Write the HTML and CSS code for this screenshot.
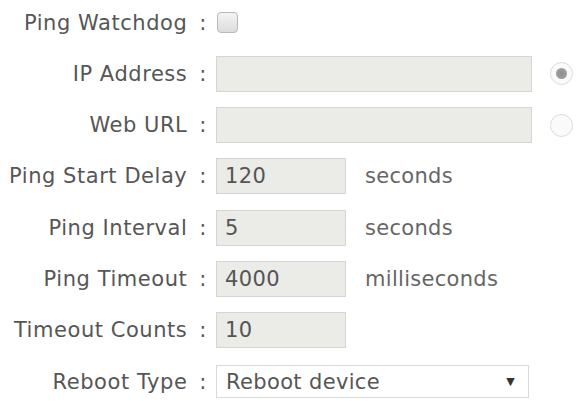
FILE: index.html
```html
<!DOCTYPE html>
<html lang="en">
<head>
<meta charset="utf-8">
<title>Ping Watchdog</title>
<link rel="stylesheet" href="styles.css">
</head>
<body>
<form class="watchdog">
  <div class="row">
    <label class="label" for="pw">Ping Watchdog<span class="colon">:</span></label>
    <input class="check" type="checkbox" id="pw">
  </div>
  <div class="row">
    <label class="label" for="ip">IP Address<span class="colon">:</span></label>
    <input class="field wide" type="text" id="ip">
    <input class="radio" type="radio" name="target" checked>
  </div>
  <div class="row">
    <label class="label" for="url">Web URL<span class="colon">:</span></label>
    <input class="field wide" type="text" id="url">
    <input class="radio" type="radio" name="target">
  </div>
  <div class="row">
    <label class="label" for="delay">Ping Start Delay<span class="colon">:</span></label>
    <input class="field short" type="text" id="delay" value="120">
    <span class="unit">seconds</span>
  </div>
  <div class="row">
    <label class="label" for="interval">Ping Interval<span class="colon">:</span></label>
    <input class="field short" type="text" id="interval" value="5">
    <span class="unit">seconds</span>
  </div>
  <div class="row">
    <label class="label" for="timeout">Ping Timeout<span class="colon">:</span></label>
    <input class="field short" type="text" id="timeout" value="4000">
    <span class="unit">milliseconds</span>
  </div>
  <div class="row">
    <label class="label" for="counts">Timeout Counts<span class="colon">:</span></label>
    <input class="field short" type="text" id="counts" value="10">
  </div>
  <div class="row">
    <span class="label">Reboot Type<span class="colon">:</span></span>
    <div class="select">
      <span class="select-value">Reboot device</span>
      <span class="select-arrow">▼</span>
    </div>
  </div>
</form>
</body>
</html>
```

FILE: styles.css
```css
* {
  box-sizing: border-box;
}

html, body {
  margin: 0;
  background: #ffffff;
}

body {
  font-family: "DejaVu Sans", Verdana, sans-serif;
  font-size: 21px;
  color: #565656;
}

.watchdog {
  display: flex;
  flex-direction: column;
  gap: 15.3px;
  padding-top: 4.5px;
}

.row {
  display: flex;
  align-items: center;
  height: 36px;
}

.label {
  width: 207px;
  margin-right: 9px;
  text-align: right;
  white-space: nowrap;
  letter-spacing: 0.55px;
}

/* colon sits a little apart from the label text */
.colon {
  padding-left: 12px;
}

.field {
  height: 36px;
  border: 1px solid #d6d6d1;
  background: #ebebe7;
  font: inherit;
  color: #555;
  padding: 0 8px;
  outline: none;
  letter-spacing: 0.35px;
}

.wide {
  width: 316px;
}

.short {
  width: 130px;
}

.unit {
  margin-left: 19px;
  color: #666;
  letter-spacing: 0.3px;
}

.check {
  appearance: none;
  margin: 0 0 0 1px;
  width: 21px;
  height: 21px;
  border: 1px solid #b9b9b9;
  border-radius: 4px;
  background: linear-gradient(#f4f4f4, #dcdcdc);
}

.radio {
  appearance: none;
  margin: 0 0 0 18px;
  width: 23px;
  height: 23px;
  border: 1px solid #dcdcdc;
  border-radius: 50%;
  background: #fafafa;
  display: grid;
  place-items: center;
}

.radio:checked::after {
  content: "";
  width: 11px;
  height: 11px;
  border-radius: 50%;
  background: radial-gradient(#8c8c8c, #a8a8a8);
}

.select {
  width: 313px;
  height: 33px;
  border: 1px solid #d9d9d9;
  background: #ffffff;
  display: flex;
  align-items: center;
  justify-content: space-between;
  padding: 0 13px 0 9px;
  letter-spacing: 0.35px;
}

.select-arrow {
  font-size: 11px;
  color: #333;
}
```
